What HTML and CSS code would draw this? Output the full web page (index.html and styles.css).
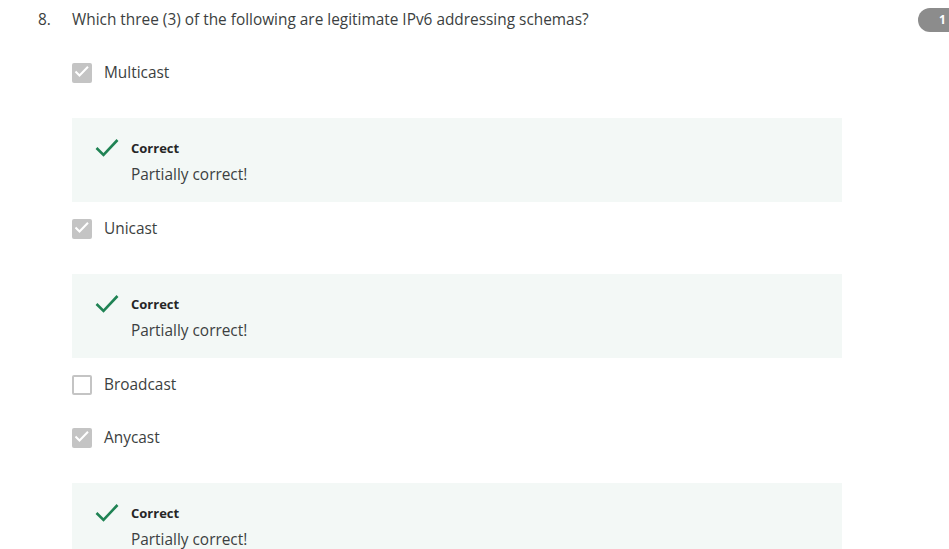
FILE: index.html
```html
<!DOCTYPE html>
<html>
<head>
<meta charset="utf-8">
<link rel="stylesheet" href="styles.css">
</head>
<body>
<div class="page">
  <div class="question">
    <div class="qnum">8.</div>
    <div class="qbody">
      <div class="qtext">Which three (3) of the following are legitimate IPv6 addressing schemas?</div>
      <div class="options">
        <div class="option">
          <div class="row"><span class="cb checked"><svg viewBox="0 0 20 20" width="20" height="20"><path d="M3.5 8.5 L7.5 12.5 L16 3.8" fill="none" stroke="#fff" stroke-width="2"/></svg></span><span class="label">Multicast</span></div>
          <div class="feedback">
            <svg class="tick" viewBox="0 0 24 20" width="24" height="20"><path d="M1.5 10 L8.5 17 L22.5 2" fill="none" stroke="#1f8354" stroke-width="2.6"/></svg>
            <div class="ftext"><div class="fhead">Correct</div><div class="fmsg">Partially correct!</div></div>
          </div>
        </div>
        <div class="option">
          <div class="row"><span class="cb checked"><svg viewBox="0 0 20 20" width="20" height="20"><path d="M3.5 8.5 L7.5 12.5 L16 3.8" fill="none" stroke="#fff" stroke-width="2"/></svg></span><span class="label">Unicast</span></div>
          <div class="feedback">
            <svg class="tick" viewBox="0 0 24 20" width="24" height="20"><path d="M1.5 10 L8.5 17 L22.5 2" fill="none" stroke="#1f8354" stroke-width="2.6"/></svg>
            <div class="ftext"><div class="fhead">Correct</div><div class="fmsg">Partially correct!</div></div>
          </div>
        </div>
        <div class="option">
          <div class="row"><span class="cb"></span><span class="label">Broadcast</span></div>
        </div>
        <div class="option">
          <div class="row"><span class="cb checked"><svg viewBox="0 0 20 20" width="20" height="20"><path d="M3.5 8.5 L7.5 12.5 L16 3.8" fill="none" stroke="#fff" stroke-width="2"/></svg></span><span class="label">Anycast</span></div>
          <div class="feedback">
            <svg class="tick" viewBox="0 0 24 20" width="24" height="20"><path d="M1.5 10 L8.5 17 L22.5 2" fill="none" stroke="#1f8354" stroke-width="2.6"/></svg>
            <div class="ftext"><div class="fhead">Correct</div><div class="fmsg">Partially correct!</div></div>
          </div>
        </div>
      </div>
    </div>
  </div>
  <div class="badge">1</div>
</div>
</body>
</html>
```
FILE: styles.css
```css
html, body { margin: 0; padding: 0; background: #fff; }
body {
  font-family: "Open Sans", "Noto Sans", sans-serif;
  color: #3c3f41;
  overflow: hidden;
}
.page { position: relative; width: 949px; height: 549px; overflow: hidden; }
.question { display: flex; padding-top: 8px; }
.qnum { width: 34px; padding-left: 38px; font-size: 15.4px; line-height: 24px; }
.qbody { width: 770px; }
.qtext { font-size: 15.4px; line-height: 24px; margin-bottom: 29px; }
.options { display: flex; flex-direction: column; }
.option { display: flex; flex-direction: column; }
.row { display: flex; align-items: center; height: 24px; margin-bottom: 29px; }
.cb {
  width: 20px; height: 20px;
  border: 2px solid #c4c4c4;
  border-radius: 2px;
  box-sizing: border-box;
  margin-right: 12px;
  flex: none;
}
.cb.checked { background: #c4c4c4; border: 0; }
.cb svg { display: block; width: 20px; height: 20px; }
.label { font-size: 15.4px; line-height: 24px; }
.feedback {
  background: #f3f8f6;
  margin-top: 4px;
  margin-bottom: 15px;
  height: 84px;
  box-sizing: border-box;
  padding: 20px 0 0 23px;
  display: flex;
  align-items: flex-start;
}
.tick { flex: none; margin-right: 12px; }
.fhead { font-size: 13px; font-weight: 700; line-height: 20px; color: #262626; }
.fmsg { font-size: 15.4px; line-height: 24px; margin-top: 5px; }
.badge {
  position: absolute; top: 8px; left: 918px;
  width: 50px; height: 24px; border-radius: 12px;
  background: #8c8c8c; color: #fff;
  font-size: 12px; font-weight: 700; line-height: 24px;
  padding-left: 21px; box-sizing: border-box;
}
```
